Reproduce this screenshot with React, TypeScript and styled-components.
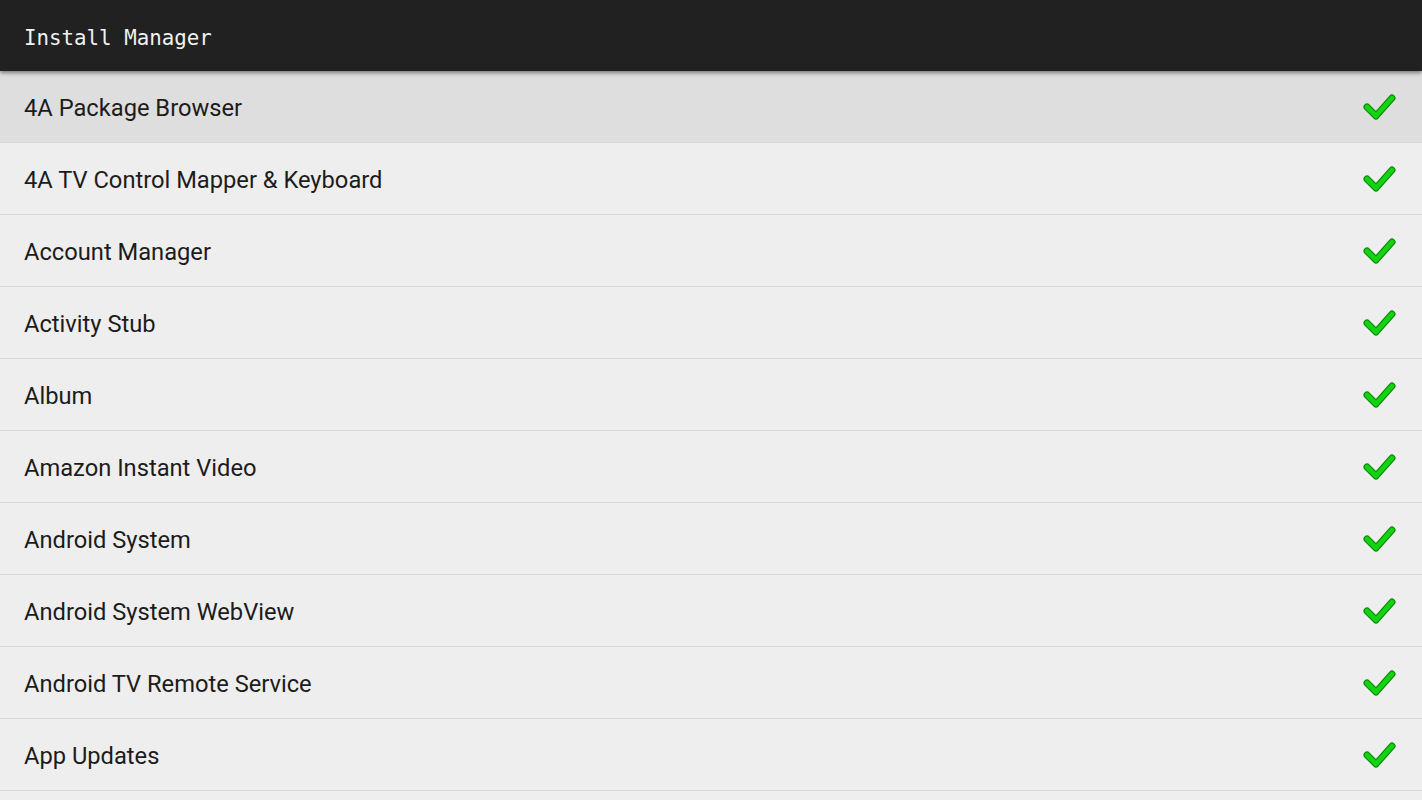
import React from 'react';
import styled, { createGlobalStyle } from 'styled-components';

const apps = [
  '4A Package Browser',
  '4A TV Control Mapper & Keyboard',
  'Account Manager',
  'Activity Stub',
  'Album',
  'Amazon Instant Video',
  'Android System',
  'Android System WebView',
  'Android TV Remote Service',
  'App Updates'
];

const GlobalStyle = createGlobalStyle`
  html, body {
    margin: 0;
    padding: 0;
    background: #eeeeee;
    overflow: hidden;
  }
`;

const Page = styled.div`
  width: 1422px;
  height: 800px;
  overflow: hidden;
  background: #eeeeee;
  font-family: Roboto, 'Liberation Sans', sans-serif;
`;

const TitleBar = styled.div`
  position: relative;
  z-index: 2;
  height: 71px;
  background: #212121;
  display: flex;
  align-items: center;
  padding-left: 24px;
  box-shadow: 0 2px 4px rgba(0, 0, 0, 0.45);
`;

const Title = styled.h1`
  margin: 0;
  font-family: 'DejaVu Sans Mono', 'Liberation Mono', monospace;
  font-weight: normal;
  font-size: 20.8px;
  color: #f2f2f2;
  padding-top: 4px;
`;

const List = styled.div`
  display: flex;
  flex-direction: column;
`;

const Row = styled.div<{ selected?: boolean }>`
  height: 71px;
  flex-shrink: 0;
  display: flex;
  align-items: center;
  justify-content: space-between;
  padding: 0 25px 0 24px;
  border-bottom: 1px solid #d9d9d9;
  background: ${(p) => (p.selected ? '#dedede' : '#eeeeee')};
`;

const Name = styled.span`
  font-size: 23.7px;
  color: #1c1c1c;
  padding-top: 2px;
`;

const Check = () => (
  <svg width="36" height="32" viewBox="0 0 36 32">
    <polyline
      points="6,16 15,25 31,7"
      fill="none"
      stroke="#0a8a0a"
      strokeWidth="7"
      strokeLinecap="round"
      strokeLinejoin="round"
    />
    <polyline
      points="6,16 15,25 31,7"
      fill="none"
      stroke="#13d313"
      strokeWidth="4.6"
      strokeLinecap="round"
      strokeLinejoin="round"
    />
  </svg>
);

const App = () => {
  return (
    <Page>
      <GlobalStyle />
      <TitleBar>
        <Title>Install Manager</Title>
      </TitleBar>
      <List>
        {apps.map((name, i) => (
          <Row key={name} selected={i === 0}>
            <Name>{name}</Name>
            <Check />
          </Row>
        ))}
        <Row />
      </List>
    </Page>
  );
};

export default App;
